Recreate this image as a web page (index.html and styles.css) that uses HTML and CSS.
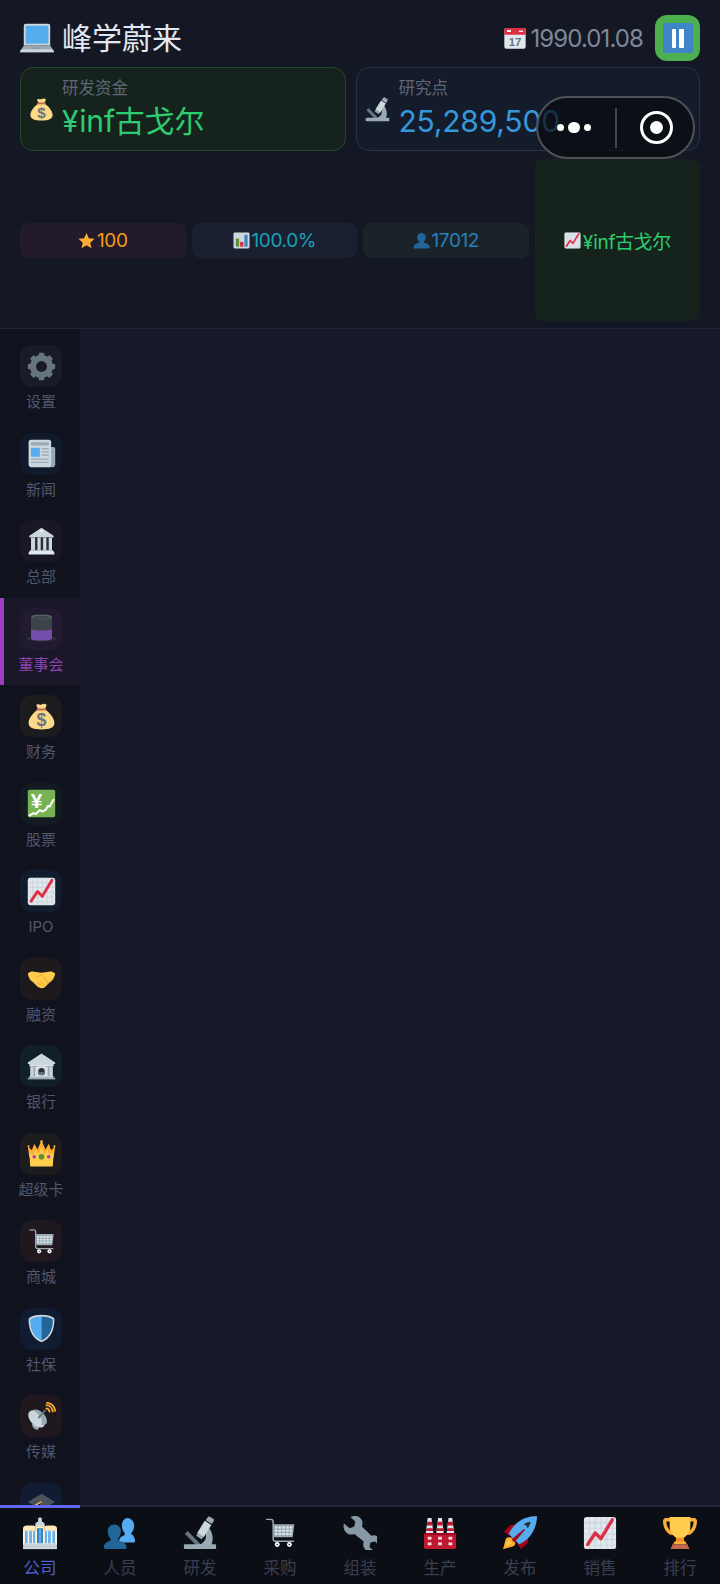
FILE: index.html
```html
<!DOCTYPE html>
<html lang="zh">
<head>
<meta charset="utf-8">
<title>峰学蔚来</title>
<link rel="stylesheet" href="styles.css">
</head>
<body>
<svg class="defs" width="0" height="0">
  <symbol id="i-laptop" viewBox="0 0 36 36"><path fill="#CCD6DD" d="M4 5a2 2 0 0 1 2-2h24a2 2 0 0 1 2 2v21H4z"/><rect fill="#55ACEE" x="6" y="5" width="24" height="19"/><path fill="#99AAB5" d="M4 26h28l4 6a1 1 0 0 1-1 1H1a1 1 0 0 1-1-1z"/><path fill="#CCD6DD" d="M2 30h32l2 2v1H0v-1z"/><rect fill="#8899A6" x="14" y="28" width="8" height="1.500"/></symbol>
  <symbol id="i-scope" viewBox="0 0 36 36"><path fill="#66757F" d="M2 19l3-3 13 13v2h-4z"/><path fill="#99AAB5" d="M27 12c4 5 6 12 3 19H15c5-1 11-5 9-13z"/><rect fill="#99AAB5" x="1" y="30" width="34" height="5" rx="1"/><path fill="#CCD6DD" d="M23 5l7 4.500-8 13-7-4.500z"/><path fill="#99AAB5" d="M15.500 18l6 4-1.500 3-6-4z"/><path fill="#99AAB5" d="M26 1.500a2 2 0 0 1 2.500-.8l3.500 2.300a2 2 0 0 1 .5 2.500l-2 3-6.500-4z"/></symbol>
  <symbol id="i-star" viewBox="0 0 36 36"><path fill="#FFAC33" d="M18 2l4.900 11.300 12.100 1.200-9.100 8.100 2.700 12L18 28.300 7.400 34.600l2.700-12L1 14.500l12.100-1.200z"/></symbol>
  <symbol id="i-bars" viewBox="0 0 36 36"><rect fill="#CCD6DD" x="1" y="1" width="34" height="34" rx="3"/><rect fill="#5C913B" x="6" y="14" width="7" height="17"/><rect fill="#DD2E44" x="15" y="21" width="7" height="10"/><rect fill="#3B88C3" x="24" y="6" width="7" height="25"/></symbol>
  <symbol id="i-bust" viewBox="0 0 36 36"><path fill="#269" d="M35 33c0 2-1 2-3 2H4c-2 0-3 0-3-2 0-5 6-9 12-10v-3c-3-2-4-6-4-9 0-5 4-9 9-9s9 4 9 9c0 3-1 7-4 9v3c6 1 13 5 13 10z"/></symbol>
  <symbol id="i-chart" viewBox="0 0 36 36"><rect fill="#E1E8ED" x="1" y="1" width="34" height="34" rx="3"/><path stroke="#CCD6DD" stroke-width="1.200" d="M7 1v34M13 1v34M19 1v34M25 1v34M31 1v34M1 7h34M1 13h34M1 19h34M1 25h34M1 31h34"/><path fill="none" stroke="#DD2E44" stroke-width="3.600" stroke-linecap="round" stroke-linejoin="round" d="M5 30l8-12 6 6L31 4"/></symbol>
  <symbol id="i-gear" viewBox="0 0 36 36"><g fill="#66757F"><circle cx="18" cy="18" r="10.500" fill="none" stroke="#66757F" stroke-width="7.500"/><rect x="14.500" y="1" width="7" height="34" rx="1.500"/><rect x="14.500" y="1" width="7" height="34" rx="1.500" transform="rotate(45 18 18)"/><rect x="14.500" y="1" width="7" height="34" rx="1.500" transform="rotate(90 18 18)"/><rect x="14.500" y="1" width="7" height="34" rx="1.500" transform="rotate(135 18 18)"/></g><circle cx="18" cy="18" r="6.800" fill="#191b26"/></symbol>
  <symbol id="i-news" viewBox="0 0 36 36"><path fill="#99AAB5" d="M26 10h7a2 2 0 0 1 2 2v20a3 3 0 0 1-3 3h-6z"/><rect fill="#CCD6DD" x="2" y="1" width="28" height="34" rx="3"/><rect fill="#99AAB5" x="5" y="4" width="22" height="4"/><rect fill="#55ACEE" x="5" y="11" width="11" height="11"/><path stroke="#99AAB5" stroke-width="1.500" d="M18 12h9M18 16h9M18 20h9M5 25h22M5 29h22"/></symbol>
  <symbol id="i-hq" viewBox="0 0 36 36"><path fill="#CCD6DD" d="M18 1L3 11v2h30v-2z"/><path fill="#fff" d="M15 5.500h6L18 3.500z"/><rect fill="#292F33" x="5" y="13" width="26" height="16"/><path fill="#CCD6DD" d="M5 13h5v16H5zM13 13h4v16h-4zM20 13h4v16h-4zM27 13h4v16h-4z"/><path fill="#E1E8ED" d="M4 29h28l2 3v2H2v-2z"/></symbol>
  <symbol id="i-hat" viewBox="0 0 36 36"><path fill="#2B2F36" d="M0 31c0-2 6-4 18-4s18 2 18 4-8 3-18 3S0 33 0 31z"/><path fill="#3D4449" d="M5 3h26v27c0 2-6 3-13 3S5 32 5 30z"/><ellipse fill="#5B6368" cx="18" cy="3.500" rx="13" ry="3"/><ellipse fill="#3D4449" cx="18" cy="4" rx="11" ry="1.800"/><path fill="#744EAA" d="M5 19c4 2 22 2 26 0v11c0 2-6 3-13 3S5 32 5 30z"/></symbol>
  <symbol id="i-shake" viewBox="0 0 36 36"><path fill="#FFCC4D" d="M1 12c3-3 7-3 10-2l7 1 7-1c3-1 7-1 10 2-1 5-3 9-7 11l-5 5c-2 2-3 2-5 2s-3 0-5-2l-5-5C4 21 2 17 1 12z"/><path fill="#FFAC33" d="M4 17l7 8 5 5-7-7zM32 17l-6 7-7 6 6-7z"/><path fill="none" stroke="#F19020" stroke-width="1" d="M12 17l6-4 8 10M16 21l5 5M13 23l5 4"/></symbol>
  <symbol id="i-bank" viewBox="0 0 36 36"><path fill="#CCD6DD" d="M18 2L1 13v2h34v-2z"/><path fill="#E1E8ED" d="M3 15h30v3H3z"/><rect fill="#CCD6DD" x="4" y="18" width="28" height="12"/><path fill="#99AAB5" d="M8 19h2v11H8zM26 19h2v11h-2z"/><rect fill="#E1E8ED" x="12" y="18" width="12" height="12"/><path fill="#292F33" d="M14 28v-4a4 4 0 0 1 8 0v4z"/><rect fill="#66757F" x="15" y="25" width="6" height="4"/><path fill="#E1E8ED" d="M3 30h30v2H3z"/><path fill="#99AAB5" d="M1 32h34v2H1z"/></symbol>
  <symbol id="i-crown" viewBox="0 0 36 36"><path fill="#FFAC33" d="M1 9l5 5 3-8 4 7 5-11 5 11 4-7 3 8 5-5-2 14H3z"/><path fill="#FFCC4D" d="M3 17l5 3 3-7 3 6 4-8 4 8 3-6 3 7 5-3-1 17H4z"/><circle cx="18" cy="22" r="3.500" fill="#5C913B"/><circle cx="9" cy="22" r="2.200" fill="#AA3FAF"/><circle cx="27" cy="22" r="2.200" fill="#AA3FAF"/><circle cx="2" cy="9" r="1.200" fill="#FFCC4D"/><circle cx="34" cy="9" r="1.200" fill="#FFCC4D"/><circle cx="18" cy="3" r="1.500" fill="#FFCC4D"/></symbol>
  <symbol id="i-cart" viewBox="0 0 36 36"><g transform="translate(3 1) scale(.86)"><path fill="none" stroke="#99AAB5" stroke-width="1.800" stroke-linecap="round" d="M1 3h5c2 0 3 1 3 3v21c0 2 1 3 3 3h22"/><path fill="#99AAB5" d="M9 9h26l-2 16H10z"/><path stroke="#E1E8ED" stroke-width="2.600" stroke-dasharray="3.200 1.400" d="M11 13h22M11 17h21.500M11 21h21"/><circle cx="14" cy="34" r="3" fill="#fff"/><circle cx="14" cy="34" r="1" fill="#292F33"/><circle cx="29" cy="34" r="3" fill="#fff"/><circle cx="29" cy="34" r="1" fill="#292F33"/></g></symbol>
  <symbol id="i-shield" viewBox="0 0 36 36"><path fill="#CCD6DD" d="M18 1C13 1 8 2 4 4c-2 1-2 2-2 4 0 14 7 24 16 27 9-3 16-13 16-27 0-2 0-3-2-4-4-2-9-3-14-3z"/><path fill="#55ACEE" d="M18 3C13 3 9 4 5.500 5.500 4 6 4 7 4 8.500 4 21 10 30 18 33z"/><path fill="#269" d="M18 3c5 0 9 1 12.500 2.500C32 6 32 7 32 8.500 32 21 26 30 18 33z"/></symbol>
  <symbol id="i-dish" viewBox="0 0 36 36"><path fill="#99AAB5" d="M6 28l6-4 4 3-2 7c-3 1-6 0-8-6z"/><path fill="#CCD6DD" d="M3 12c4-3 9-2 14 3s7 11 4 15c-3 3-9 2-14-3S0 15 3 12z"/><path fill="#99AAB5" d="M7 10c4-2 9 0 13 4s6 10 4 13c-2 2-5 2-6 1 2-5-1-11-11-18z"/><path stroke="#66757F" stroke-width="2" d="M14 20l9-10"/><path fill="none" stroke="#FFAC33" stroke-width="2.200" stroke-linecap="round" d="M24 8a5 5 0 0 1 4 4M24 4a9 9 0 0 1 8 8M25 1a12 12 0 0 1 10 10"/></symbol>
  <symbol id="i-cap" viewBox="0 0 36 36"><path fill="#4B5258" d="M18 6L1 16l17 10 17-10z"/><path fill="#31373D" d="M7 21v8c4 4 18 4 22 0v-8l-11 6z"/><path stroke="#FFCC4D" stroke-width="1.500" d="M18 16l-9 5v10"/></symbol>
  <symbol id="i-office" viewBox="0 0 36 36"><path fill="#FFE8B6" d="M0 13c0-2 2-3 4-3h7c1 0 2 1 2 2v3H0zM23 12c0-1 1-2 2-2h7c2 0 4 1 4 3v2H23z"/><path fill="#CCD6DD" d="M13 9c0-2 2-3 3-3V3c0-2 4-2 4 0v3c1 0 3 1 3 3v4H13z"/><rect fill="#FFF8E8" x="0" y="15" width="36" height="20"/><path fill="#FFE8B6" d="M13 11h10v4H13z"/><g fill="#6CB4EA"><rect x="2" y="16" width="3" height="13"/><rect x="6.500" y="16" width="3" height="13"/><rect x="10.500" y="16" width="2.500" height="13"/><rect x="23" y="16" width="2.500" height="13"/><rect x="26.500" y="16" width="3" height="13"/><rect x="31" y="16" width="3" height="13"/></g><rect fill="#269" x="15" y="13" width="6" height="16"/><rect fill="#55ACEE" x="16.500" y="13" width="3" height="16"/><rect fill="#CCD6DD" x="0" y="29" width="36" height="6"/><path stroke="#99AAB5" stroke-width="1" stroke-dasharray="1.500 2" d="M0 32h36"/></symbol>
  <symbol id="i-people" viewBox="0 0 36 36"><path fill="#55ACEE" d="M34 27c0 1-1 1-2 1H19c-1 0-2 0-2-1 0-4 3-6 6-7v-2c-2-2-3-5-3-8 0-5 3-8 6-8s7 3 7 8c0 3-1 6-3 8v1c2 1 4 4 4 8z"/><path fill="#269" d="M25 33c0 1-1 2-2 2H3c-1 0-2-1-2-2 0-4 4-6 7-7v-2c-2-2-3-5-3-8 0-4 3-7 7-7s7 3 7 7c0 3-1 6-3 8v2c4 1 9 3 9 7z"/></symbol>
  <symbol id="i-wrench" viewBox="0 0 36 36"><path fill="#8899A6" d="M1 8l6 5 5-2 1-5-5-5c5-2 9-1 11 2 2 3 2 5 1 8l10 10c3-1 6-1 8 2 2 3 2 6 1 9l-5-5-5 1-1 5 5 4c-3 1-6 1-9-1-3-3-3-6-2-9L12 19c-3 1-6 1-8-1-3-2-4-6-3-10z"/></symbol>
  <symbol id="i-factory" viewBox="0 0 36 36"><path fill="#BE1931" d="M2 18h32a1 1 0 0 1 1 1v14a2 2 0 0 1-2 2H3a2 2 0 0 1-2-2V19a1 1 0 0 1 1-1z"/><path fill="#A0041E" d="M1 18h34v2H1z"/><g fill="#FFD8DC"><rect x="5" y="22" width="4" height="3"/><rect x="16" y="22" width="4" height="3"/><rect x="27" y="22" width="4" height="3"/><rect x="5" y="28" width="4" height="3"/><rect x="16" y="28" width="4" height="3"/><rect x="27" y="28" width="4" height="3"/></g><g><path fill="#E1E8ED" d="M5 2h4l2 16H3z"/><path fill="#BE1931" d="M4.500 6h5l.5 4H4zM3.600 13h6.800l.5 3H3.200z"/></g><g><path fill="#E1E8ED" d="M16 2h4l2 16h-8z"/><path fill="#BE1931" d="M15.500 6h5l.5 4h-6zM14.600 13h6.800l.5 3h-7.700z"/></g><g><path fill="#E1E8ED" d="M27 2h4l2 16h-8z"/><path fill="#BE1931" d="M26.500 6h5l.5 4h-6zM25.600 13h6.800l.5 3h-7.700z"/></g></symbol>
  <symbol id="i-rocket" viewBox="0 0 36 36"><path fill="#A0041E" d="M1 17l5-6c2-2 6-2 8-1l-7 11zM19 35l6-5c2-2 2-6 1-8l-11 7z"/><path fill="#FFAC33" d="M3 24c-1 3-2 8-3 11 3-1 8-2 11-3 2-1 3-4 1-7-3-3-7-3-9-1z"/><path fill="#FFCC4D" d="M5 27c-1 2-1 3-2 5 2-1 3-1 5-2 1-1 1-2 0-3s-2-1-3 0z"/><path fill="#55ACEE" d="M36 0c-8 0-17 3-23 9-3 3-5 6-7 10l11 11c4-2 7-4 10-7 6-6 9-15 9-23z"/><path fill="#292F33" d="M22 9c2-2 5-3 7-3 0 2-1 5-3 7-.5-2-2-3.500-4-4z"/><path fill="#A0041E" d="M9 25L22 14c1 0 1 0 1 1L12 28z"/></symbol>
  <symbol id="i-trophy" viewBox="0 0 36 36"><path fill="none" stroke="#FFAC33" stroke-width="3.600" d="M9 4H3c-1 0-1.500 1-1 4 .5 4 3 8 6 10h4M27 4h6c1 0 1.500 1 1 4-.5 4-3 8-6 10h-4"/><path fill="#FFCC4D" d="M7 1h22v10c0 6-4 10-7 12v4h-8v-4c-3-2-7-6-7-12z"/><path fill="#F19020" d="M14 23h8l1 6H13z"/><path fill="#FFAC33" d="M12 27h12l1 3H11z"/><path fill="#C1694F" d="M10 30h16l2 5H8z"/></symbol>
</svg>

<div class="app">
  <header class="top">
    <div class="title-row">
      <div class="brand"><svg class="ico ico-laptop"><use href="#i-laptop"/></svg><h1 class="brand-name">峰学蔚来</h1></div>
      <div class="status">
        <svg class="ico ico-cal" viewBox="0 0 36 36"><rect fill="#E1E8ED" x="2" y="3" width="32" height="31" rx="3"/><path fill="#DD2E44" d="M5 3h26a3 3 0 0 1 3 3v7H2V6a3 3 0 0 1 3-3z"/><rect fill="#fff" x="6" y="6" width="6" height="3"/><rect fill="#fff" x="24" y="7" width="6" height="2"/><text class="glyph" x="18" y="30" font-size="17" fill="#66757F">17</text></svg><span class="date">1990.01.08</span>
        <button class="pause" type="button" aria-label="暂停"><span class="pause-in"><i class="bar"></i><i class="bar"></i></span></button>
      </div>
    </div>
    <div class="cards">
      <div class="card card-green">
        <svg class="ico ico-card" viewBox="0 0 36 36"><path fill="#FDD888" d="M14 9c-1-2-3-5-2-6 2-1 4 1 6 0s4-1 6 0c1 1-1 4-2 6 6 4 12 11 12 17 0 6-6 8-16 8S2 32 2 26c0-6 6-13 12-17z"/><path fill="#BF6952" d="M13 8h10a1 1 0 0 1 0 2.500H13A1 1 0 0 1 13 8z"/><text class="glyph" x="18" y="30" font-size="22" fill="#67757F">$</text></svg>
        <div class="card-body"><div class="card-label">研发资金</div><div class="card-value val-green">¥inf古戈尔</div></div>
      </div>
      <div class="card card-blue">
        <svg class="ico ico-card"><use href="#i-scope"/></svg>
        <div class="card-body"><div class="card-label">研究点</div><div class="card-value val-blue">25,289,500</div></div>
      </div>
    </div>
    <div class="stats">
      <div class="stat stat-orange"><svg class="ico ico-stat"><use href="#i-star"/></svg>100</div>
      <div class="stat stat-cyan"><svg class="ico ico-stat"><use href="#i-bars"/></svg>100.0%</div>
      <div class="stat stat-blue"><svg class="ico ico-stat"><use href="#i-bust"/></svg>17012</div>
      <div class="stat stat-green"><svg class="ico ico-stat"><use href="#i-chart"/></svg>¥inf古戈尔</div>
    </div>
  </header>

  <div class="middle">
    <nav class="side">
      <a class="side-item"><span class="side-box tint-gray"><svg class="ico ico-side"><use href="#i-gear"/></svg></span><span class="side-label">设置</span></a>
      <a class="side-item"><span class="side-box tint-blue"><svg class="ico ico-side"><use href="#i-news"/></svg></span><span class="side-label">新闻</span></a>
      <a class="side-item"><span class="side-box tint-purple"><svg class="ico ico-side"><use href="#i-hq"/></svg></span><span class="side-label">总部</span></a>
      <a class="side-item is-active"><span class="side-box tint-violet"><svg class="ico ico-side"><use href="#i-hat"/></svg></span><span class="side-label">董事会</span></a>
      <a class="side-item"><span class="side-box tint-amber"><svg class="ico ico-side" viewBox="0 0 36 36"><path fill="#FDD888" d="M14 9c-1-2-3-5-2-6 2-1 4 1 6 0s4-1 6 0c1 1-1 4-2 6 6 4 12 11 12 17 0 6-6 8-16 8S2 32 2 26c0-6 6-13 12-17z"/><path fill="#BF6952" d="M13 8h10a1 1 0 0 1 0 2.500H13A1 1 0 0 1 13 8z"/><text class="glyph" x="18" y="30" font-size="22" fill="#67757F">$</text></svg></span><span class="side-label">财务</span></a>
      <a class="side-item"><span class="side-box tint-green"><svg class="ico ico-side" viewBox="0 0 36 36"><rect fill="#77B255" x="1" y="1" width="34" height="34" rx="2"/><text class="glyph" x="12" y="23" font-size="26" fill="#fff">¥</text><path fill="none" stroke="#fff" stroke-width="2.400" stroke-linejoin="round" stroke-linecap="round" d="M3 33l5-3 3 1 5-5 3 2 4-2 3-5 2 1 5-9"/></svg></span><span class="side-label">股票</span></a>
      <a class="side-item"><span class="side-box tint-teal"><svg class="ico ico-side"><use href="#i-chart"/></svg></span><span class="side-label">IPO</span></a>
      <a class="side-item"><span class="side-box tint-brown"><svg class="ico ico-side"><use href="#i-shake"/></svg></span><span class="side-label">融资</span></a>
      <a class="side-item"><span class="side-box tint-cyan"><svg class="ico ico-side"><use href="#i-bank"/></svg></span><span class="side-label">银行</span></a>
      <a class="side-item"><span class="side-box tint-amber"><svg class="ico ico-side"><use href="#i-crown"/></svg></span><span class="side-label">超级卡</span></a>
      <a class="side-item"><span class="side-box tint-rose"><svg class="ico ico-side"><use href="#i-cart"/></svg></span><span class="side-label">商城</span></a>
      <a class="side-item"><span class="side-box tint-navy"><svg class="ico ico-side"><use href="#i-shield"/></svg></span><span class="side-label">社保</span></a>
      <a class="side-item"><span class="side-box tint-rose"><svg class="ico ico-side"><use href="#i-dish"/></svg></span><span class="side-label">传媒</span></a>
      <a class="side-item"><span class="side-box tint-navy"><svg class="ico ico-side"><use href="#i-cap"/></svg></span></a>
    </nav>
    <main class="content"></main>
  </div>

  <nav class="tabs">
    <a class="tab is-active"><svg class="ico ico-tab"><use href="#i-office"/></svg><span class="tab-label">公司</span></a>
    <a class="tab"><svg class="ico ico-tab"><use href="#i-people"/></svg><span class="tab-label">人员</span></a>
    <a class="tab"><svg class="ico ico-tab"><use href="#i-scope"/></svg><span class="tab-label">研发</span></a>
    <a class="tab"><svg class="ico ico-tab"><use href="#i-cart"/></svg><span class="tab-label">采购</span></a>
    <a class="tab"><svg class="ico ico-tab"><use href="#i-wrench"/></svg><span class="tab-label">组装</span></a>
    <a class="tab"><svg class="ico ico-tab"><use href="#i-factory"/></svg><span class="tab-label">生产</span></a>
    <a class="tab"><svg class="ico ico-tab"><use href="#i-rocket"/></svg><span class="tab-label">发布</span></a>
    <a class="tab"><svg class="ico ico-tab"><use href="#i-chart"/></svg><span class="tab-label">销售</span></a>
    <a class="tab"><svg class="ico ico-tab"><use href="#i-trophy"/></svg><span class="tab-label">排行</span></a>
  </nav>

  <div class="capsule">
    <span class="cap-more"><i class="dot"></i><i class="dot dot-big"></i><i class="dot"></i></span>
    <span class="cap-line"></span>
    <span class="cap-close"><i class="cap-core"></i></span>
  </div>
</div>
</body>
</html>
```

FILE: styles.css
```css
* { box-sizing: border-box; }
html, body { margin: 0; padding: 0; }
body {
  width: 720px;
  height: 1584px;
  overflow: hidden;
  background: #161a29;
  font-family: Inter, "Noto Sans CJK SC", sans-serif;
}
.defs { position: absolute; }
.ico { display: block; flex: none; }
.glyph { font-family: "Liberation Sans", sans-serif; font-weight: 700; text-anchor: middle; }
.app { position: relative; display: flex; flex-direction: column; height: 1584px; }

/* header */
.top {
  height: 329px;
  padding: 15px 20px 7px;
  background: #141824;
  border-bottom: 1px solid #20253a;
  display: flex;
  flex-direction: column;
}
.title-row { height: 46px; display: flex; align-items: center; justify-content: space-between; margin-bottom: 6px; }
.brand { display: flex; align-items: center; gap: 8px; }
.ico-laptop { width: 34px; height: 34px; }
.brand-name { margin: 0; font-size: 30px; line-height: 46px; font-weight: 400; color: #e2e8f0; }
.status { display: flex; align-items: center; }
.ico-cal { width: 24px; height: 24px; margin-right: 3px; }
.date { font-size: 24px; color: #7f8799; letter-spacing: -0.9px; margin-right: 12px; }
.pause { width: 45px; height: 46px; padding: 0; border: 0; border-radius: 12px; background: #4caf50; display: flex; align-items: center; justify-content: center; }
.pause-in { width: 30px; height: 30px; background: #3d85c6; border-radius: 2px; display: flex; align-items: center; justify-content: center; gap: 3px; }
.bar { display: block; width: 4.500px; height: 19px; background: #fff; border-radius: 1px; }

.cards { display: flex; gap: 10px; height: 84px; margin-bottom: 8px; }
.card { display: flex; align-items: center; padding: 0 8px; border-radius: 13px; border: 1.500px solid; }
.card-green { flex: 326 1 0; background: #15231c; border-color: #24452f; }
.card-blue { flex: 344 1 0; background: #141c2c; border-color: #22324a; }
.ico-card { width: 25px; height: 25px; margin-right: 8px; }
.card-label { font-size: 16.500px; line-height: 23px; color: #5f6678; }
.card-value { font-size: 30px; line-height: 42px; letter-spacing: -0.2px; white-space: nowrap; }
.val-green { color: #2ecc71; }
.val-blue { color: #3498db; }

.stats { flex: 1; display: grid; grid-template-columns: repeat(4, 1fr); column-gap: 6px; align-items: center; }
.stat { height: 35px; border-radius: 8px; display: flex; align-items: center; justify-content: center; font-size: 19px; letter-spacing: -0.4px; gap: 2px; white-space: nowrap; }
.stat-orange { background: #231a2c; color: #f39c12; }
.stat-cyan { background: #1a2030; color: #17a2b8; }
.stat-blue { background: #1a2329; color: #2980b9; }
.stat-green { background: #15231c; color: #2ecc71; align-self: stretch; height: auto; }
.ico-stat { width: 17px; height: 17px; }

/* middle */
.middle { flex: 1; min-height: 0; display: flex; overflow: hidden; }
.side { width: 80px; flex: none; padding-top: 6px; background: #10131e; }
.side-item { position: relative; width: 82px; height: 87.500px; padding-top: 10px; display: flex; flex-direction: column; align-items: center; }
.side-box { width: 42px; height: 42px; border-radius: 12px; display: flex; align-items: center; justify-content: center; flex: none; }
.ico-side { width: 29px; height: 29px; }
.side-label { margin-top: 4px; font-size: 15px; line-height: 22px; color: #50566c; white-space: nowrap; }
.is-active.side-item { background: #1a1728; }
.is-active.side-item::before { content: ""; position: absolute; left: 0; top: 0; bottom: 0; width: 4px; background: #9b3fc0; }
.is-active .side-label { color: #8e44ad; }
.tint-gray { background: #191b26; }
.tint-blue { background: #111a2a; }
.tint-purple { background: #191726; }
.tint-violet { background: #211a30; }
.tint-amber { background: #1c1c1e; }
.tint-green { background: #121c20; }
.tint-teal { background: #111d2c; }
.tint-brown { background: #1e191d; }
.tint-cyan { background: #112026; }
.tint-rose { background: #20181f; }
.tint-navy { background: #111c33; }
.content { flex: 1; background: #161a29; }

/* tabs */
.tabs { position: relative; height: 79px; flex: none; display: grid; grid-template-columns: repeat(9, 80px); background: #0c0e15; border-top: 2px solid #232838; }
.tab { position: relative; display: flex; flex-direction: column; align-items: center; padding-top: 9px; }
.ico-tab { width: 34px; height: 34px; }
.tab-label { margin-top: 6px; font-size: 16.500px; line-height: 24px; color: #3a3f4f; }
.tab.is-active .tab-label { color: #4f5fd8; }
.tab.is-active::before { content: ""; position: absolute; left: 0; right: 0; top: -2px; height: 3px; background: #6366f1; }

/* capsule overlay */
.capsule {
  position: absolute;
  left: 535.500px;
  top: 96px;
  width: 159px;
  height: 63px;
  border-radius: 32px;
  border: 2px solid #4f5157;
  background: rgba(10, 11, 15, 0.72);
  display: flex;
  align-items: center;
}
.cap-more { width: 77.500px; padding-left: 19.500px; display: flex; align-items: center; gap: 4px; }
.dot { display: block; flex: none; width: 7px; height: 7px; border-radius: 50%; background: #fff; }
.dot-big { width: 11.500px; height: 11.500px; }
.cap-line { width: 2px; height: 40px; background: #44464c; }
.cap-close { width: 33px; height: 33px; margin-left: 23px; border-radius: 50%; border: 3.500px solid #fff; display: flex; align-items: center; justify-content: center; }
.cap-core { display: block; width: 13px; height: 13px; border-radius: 50%; background: #fff; }
```
